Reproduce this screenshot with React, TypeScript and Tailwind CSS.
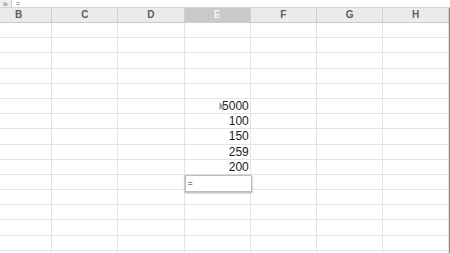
import React from 'react';

const cols = ['B', 'C', 'D', 'E', 'F', 'G', 'H'];
const values: Record<number, string> = { 5: '5000', 6: '100', 7: '150', 8: '259', 9: '200' };

const Cursor = () => (
  <svg width="7" height="9" viewBox="0 0 7 9" className="absolute left-[-3px] top-[2px]">
    <path d="M0.5 0.5 L0.5 7.5 L2.3 5.8 L3.6 8.5 L4.6 8 L3.4 5.4 L6 5.4 Z" fill="#9a9a9a" stroke="#bdbdbd" strokeWidth="0.5" />
  </svg>
);

export default function App() {
  const rows = Array.from({ length: 16 }, (_, i) => i);

  return (
    <div className="w-[450px] h-[253px] overflow-hidden bg-white flex flex-col" style={{ fontFamily: '"Liberation Sans", Arial, sans-serif' }}>
      {/* Formula bar */}
      <div className="h-[8px] flex items-center border-b border-[#d4d4d4] shrink-0">
        <div className="w-[12px] h-full bg-[#efefef] border-r border-[#c8c8c8] flex items-center justify-center text-[6px] italic text-[#666] leading-none">
          fx
        </div>
        <span className="ml-[4px] text-[7px] leading-none text-[#555]">=</span>
      </div>

      <div className="flex ml-[-14px]">
        <div className="flex flex-col">
          {/* Column headers */}
          <div className="flex h-[15px] shrink-0 bg-[#ebebeb] border-b border-[#c9c9c9]">
            {cols.map(c => (
              <div
                key={c}
                className={`w-[66.2px] shrink-0 flex items-center justify-center border-r border-[#d0d0d0] text-[10px] font-bold leading-none ${
                  c === 'E' ? 'bg-[#c9c9c9] text-[#f5f5f5]' : 'text-[#5e5e5e]'
                }`}
              >
                {c}
              </div>
            ))}
          </div>

          {/* Grid */}
          {rows.map(r => (
            <div key={r} className="flex h-[15.2px] shrink-0">
              {cols.map(c => (
                <div
                  key={c}
                  className="relative w-[66.2px] shrink-0 border-r border-b border-[#e4e4e4] flex items-center justify-end pr-[1px] text-[12px] leading-none text-[#222]"
                >
                  {c === 'E' && values[r] && (
                    <span className="relative">
                      {r === 5 && <Cursor />}
                      {values[r]}
                    </span>
                  )}
                  {c === 'E' && r === 10 && (
                    <div className="absolute left-0 top-0 w-[67px] h-[17px] bg-white border border-[#bdbdbd] shadow-[0_1px_2px_rgba(0,0,0,0.35)] z-10 flex items-center pl-[2px] text-[9px] text-[#333]">
                      =
                    </div>
                  )}
                </div>
              ))}
            </div>
          ))}
        </div>
        <div className="w-[2px] shrink-0 bg-[#8a8a8a]" />
      </div>
    </div>
  );
}
